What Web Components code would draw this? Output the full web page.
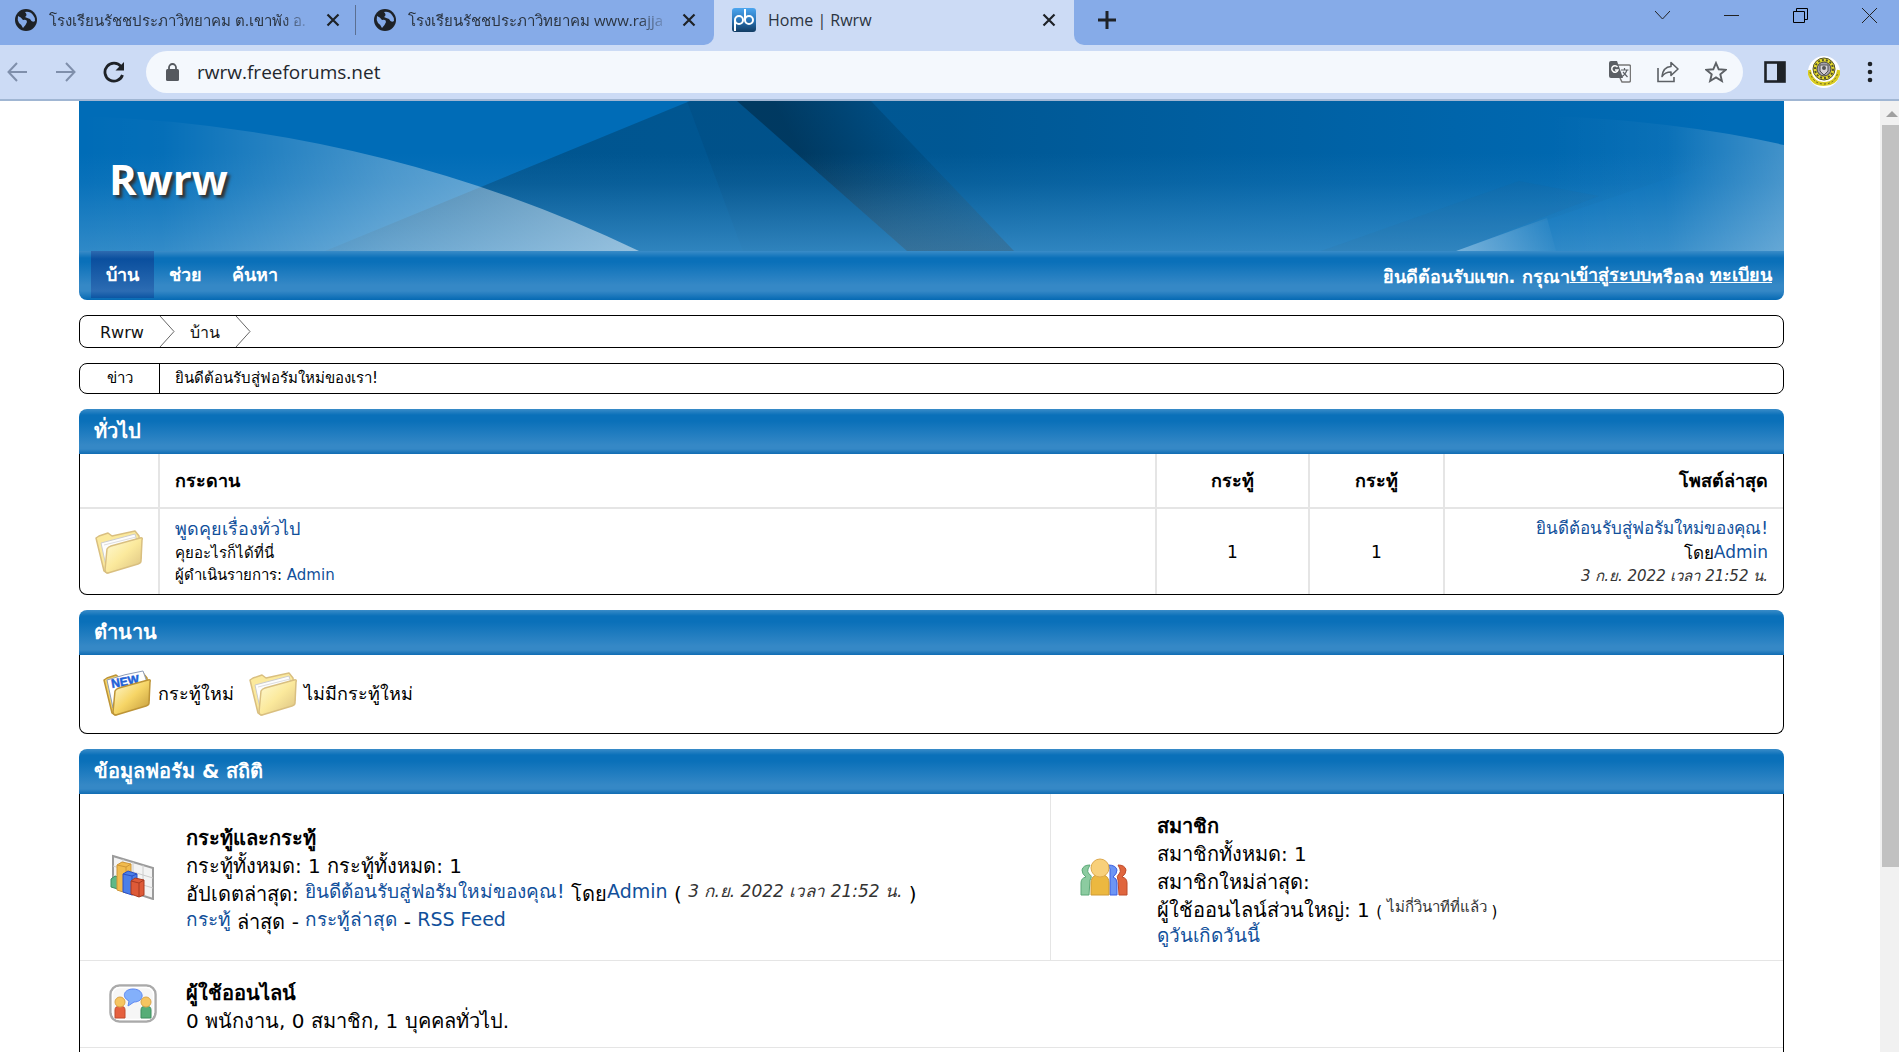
<!DOCTYPE html>
<html lang="th">
<head>
<meta charset="utf-8">
<title>Home | Rwrw</title>
<style>
    html, body {
        margin: 0;
        height: 100%;
    }

    body {
        display: flex;
        flex-direction: column;
        overflow: hidden;
        background: #fff;
        color: #000;
        font-family: "DejaVu Sans", "Noto Sans", sans-serif;
        font-size: 18px;
        --link: #11509b;
        --line: #e5e5e5;
        --bar: linear-gradient(#3a8cc8 0, #0a70b9 6px, #0a70b9 12px, #3588c6 36px, #3588c6 40px, #0f6cb3 100%);
    }
</style>
</head>
<body>
<browser-tabs></browser-tabs>
<browser-toolbar></browser-toolbar>
<page-view>
    <forum-banner name="Rwrw"></forum-banner>
    <forum-nav></forum-nav>
    <crumb-trail></crumb-trail>
    <news-bar label="ข่าว">ยินดีต้อนรับสู่ฟอรัมใหม่ของเรา!</news-bar>
    <forum-panel heading="ทั่วไป"><board-table></board-table></forum-panel>
    <forum-panel heading="ตำนาน"><forum-legend></forum-legend></forum-panel>
    <forum-panel heading="ข้อมูลฟอรัม &amp; สถิติ"><forum-stats></forum-stats></forum-panel>
</page-view>

<script>
// Shared base: puts styles and markup in an open shadow root
class ForumElement extends HTMLElement {
    constructor() {
        super();
        this.attachShadow({ mode: 'open' });
    }

    connectedCallback() {
        this.shadowRoot.innerHTML = `
            <style>
                :host, * { box-sizing: border-box; }
                a { color: var(--link); text-decoration: none; }
                button { border: 0; padding: 0; background: none; color: inherit; font: inherit; display: flex; }
                svg { display: block; flex: none; }
            </style>
            ${this.render()}
        `;
    }
}

const folder = (id, front, edge, paper) => `
    <svg width="48" height="48" viewBox="0 0 48 48">
        <defs>
            <linearGradient id="${id}" x1="0" y1="0" x2="1" y2="1">
                <stop offset="0" stop-color="#fffbd8"/>
                <stop offset=".5" stop-color="${front}"/>
                <stop offset="1" stop-color="${edge}"/>
            </linearGradient>
        </defs>
        <path d="M1 10 L4 8 L13 5 L17 8 L40 3 L44 8 L46 30 L12 45 L9 43 Z" fill="${front}" stroke="${edge}" stroke-width="1.5" stroke-linejoin="round"/>
        ${paper}
        <path d="M12 21 Q13 19 16 18 L45 10 Q48 9 47 12 L46 33 Q46 35 43 36 L13 45 Q10 45 10 42 Z" fill="url(#${id})" stroke="${edge}" stroke-width="1.5" stroke-linejoin="round"/>
    </svg>`;

const icons = {
    folder: folder('read', '#fbe99c', '#d9bf80', `
        <path d="M6 15 L40 6 L42 14 L15 20 L11 38 Z" fill="#fdfdfd" stroke="#ccc" stroke-width="1"/>
        <path d="M9 17 L41 9" stroke="#ddd"/>`),
    folderNew: folder('unread', '#f6d566', '#bd9437', `
        <path d="M4 10 Q22 4 40 1 L44 12 L14 20 L10 38 Z" fill="#fff" stroke="#8e9db8" stroke-width="1"/>
        <text x="9" y="18" transform="rotate(-10 9 18)" font-family="Liberation Sans" font-weight="bold" font-size="12" fill="#1f62d8" stroke="#1f62d8" stroke-width=".5">NEW</text>`),
    chart: `
        <svg width="46" height="46" viewBox="0 0 46 46">
            <path d="M4 2 L44 14 L44 45 L4 32 Z" fill="#f3f3f3" stroke="#9b9b9b" stroke-width="2"/>
            <path d="M4 12 L44 24 M4 22 L44 34 M14 5 V35 M24 8 V38 M34 11 V42" stroke="#ccc"/>
            <path d="M2 25 L6 22 L12 24 V36 L2 33 Z" fill="#5fb887" stroke="#3e8d62"/>
            <path d="M8 11 L13 8 L22 10 V38 L17 39 L8 36 Z" fill="#f1bb4d" stroke="#cf9637"/>
            <path d="M8 11 L17 13 L22 10 M17 13 V39" fill="none" stroke="#cf9637"/>
            <path d="M14 20 L19 17 L28 20 V40 L23 41 L14 38 Z" fill="#4a7fe8" stroke="#2b4fc4"/>
            <path d="M14 20 L23 22 L28 20 M23 22 V41" fill="none" stroke="#2b4fc4"/>
            <path d="M22 27 L26 24 L35 26 V41 L30 43 L22 40 Z" fill="#de5a38" stroke="#a83a20"/>
            <path d="M22 27 L30 29 L35 26 M30 29 V43" fill="none" stroke="#a83a20"/>
        </svg>`,
    members: `
        <svg width="48" height="40" viewBox="0 0 48 40">
            <g stroke-width="1">
                <path d="M1 38 V26 Q1 21 6 20 Q2 17 2 13 Q3 8 10 8 L8 12 Q7 15 9 17 Q13 19 10 23 L9 38 Z" fill="#8ccba0" stroke="#5ca878"/>
                <path d="M47 38 V26 Q47 21 42 20 Q46 17 46 13 Q45 8 38 8 L40 12 Q41 15 39 17 Q36 19 38 23 L39 38 Z" fill="#e0663e" stroke="#be4a2a"/>
                <path d="M37 38 V26 Q37 21 33 20 Q37 17 37 13 Q36 8 28 8 L30 12 V38 Z" fill="#6d95f4" stroke="#3c5fe0"/>
                <path d="M11 38 V26 Q11 20 16 18 H24 Q29 20 29 26 V38 Z" fill="#ecb840" stroke="#cf9a35"/>
                <circle cx="20" cy="11" r="9" fill="#f8d07a" stroke="#dda94c"/>
            </g>
        </svg>`,
    chat: `
        <svg width="48" height="40" viewBox="0 0 48 40">
            <rect x="1.500" y="1.500" width="45" height="36" rx="9" fill="#f6f6f6" stroke="#aaa" stroke-width="2.500"/>
            <rect x="3.500" y="3.500" width="41" height="32" rx="7" fill="none" stroke="#fff" stroke-width="1.500"/>
            <path d="M24 5 C36 5 36 18 25 18 L19 22 L20 17 C12 13 15 5 24 5 Z" fill="#83b0fb" stroke="#5b86f2"/>
            <path d="M6 34 V26 Q6 22 11 22 Q16 22 16 26 V34 Z" fill="#e5603e" stroke="#c04a2c"/>
            <circle cx="11" cy="18" r="5" fill="#f6c561" stroke="#dca548"/>
            <path d="M32 34 V26 Q32 22 37 22 Q42 22 42 26 V34 Z" fill="#56ad77" stroke="#3d8e5e"/>
            <circle cx="37" cy="18" r="5" fill="#f6c561" stroke="#dca548"/>
        </svg>`,
    globe: `
        <svg width="22" height="22" viewBox="0 0 22 22">
            <circle cx="11" cy="11" r="11" fill="#1e2227"/>
            <path d="M3 7 Q6 8 8 11 Q12 10 12 13 Q11 16 8 19 Q7 16 4 14 Q2 11 3 7 Z M10 3 Q15 2 18 6 Q20 8 20 12 Q17 14 15 10 Q12 9 10 8 Q13 6 10 3 Z" fill="#86abe8"/>
        </svg>`,
    cross: `<svg width="14" height="14" viewBox="0 0 14 14"><path d="M1.500 1.500 L12.500 12.500 M12.500 1.500 L1.500 12.500" stroke="#1e2227" stroke-width="2.200"/></svg>`,
};

class BrowserTab extends ForumElement {
    render() {
        return `
            <style>
                :host { display: flex; align-items: center; width: 358px; height: 40px; padding: 0 18px 0 15px; color: #2b3440; font-size: 15px; }
                :host([active]) { width: 360px; padding: 0 18px; font-size: 16px; }
                .title { flex: 1; margin: 0 12px; overflow: hidden; white-space: nowrap; line-height: 32px; }
                :host([fade]) .title { mask-image: linear-gradient(90deg, #000 88%, transparent); }
            </style>
            ${this.hasAttribute('active') ? `
            <svg width="24" height="24" viewBox="0 0 24 24">
                <defs><linearGradient id="p" x1="0" y1="0" x2="0" y2="1">
                    <stop offset="0" stop-color="#4ca6f0"/><stop offset=".5" stop-color="#2a76ba"/><stop offset="1" stop-color="#123c63"/>
                </linearGradient></defs>
                <rect width="24" height="24" rx="3" fill="url(#p)"/>
                <g fill="none" stroke="#fff" stroke-width="2">
                    <path d="M3 23 V12 M13 12 V1"/><circle cx="7" cy="12" r="4"/><circle cx="17" cy="12" r="4"/>
                </g>
            </svg>` : icons.globe}
            <span class="title"><slot></slot></span>
            <button aria-label="Close tab">${icons.cross}</button>
        `;
    }
}

class BrowserTabs extends ForumElement {
    render() {
        return `
            <style>
                :host { display: flex; flex: none; height: 45px; background: #ccdbf5; font-family: "Open Sans", "Noto Sans", sans-serif; }
                .before, .after { display: flex; background: #86abe8; }
                .before { border-bottom-right-radius: 10px; }
                .after { flex: 1; justify-content: space-between; align-items: flex-start; padding: 7px 22px 0 24px; border-bottom-left-radius: 10px; }
                .sep { width: 1px; height: 30px; margin: 5px 0 0 -3px; background: #5b6f92; }
                .before browser-tab:last-child { padding-left: 18px; }
                .windows { display: flex; gap: 54px; }
                .add { margin-top: 4px; }
            </style>
            <div class="before">
                <browser-tab fade>โรงเรียนรัชชประภาวิทยาคม ต.เขาพัง อ.</browser-tab>
                <div class="sep"></div>
                <browser-tab fade>โรงเรียนรัชชประภาวิทยาคม www.rajja</browser-tab>
            </div>
            <browser-tab active>Home | Rwrw</browser-tab>
            <div class="after">
                <button class="add" aria-label="New tab"><svg width="18" height="18" viewBox="0 0 18 18"><path d="M9 0 V18 M0 9 H18" stroke="#1e2227" stroke-width="3"/></svg></button>
                <div class="windows">
                    <button aria-label="Search tabs"><svg width="15" height="16" viewBox="0 0 15 16"><path d="M0 4 L7.500 12 L15 4" fill="none" stroke="#222"/></svg></button>
                    <button aria-label="Minimize"><svg width="15" height="16" viewBox="0 0 15 16"><path d="M0 8.500 H15" stroke="#222"/></svg></button>
                    <button aria-label="Restore"><svg width="15" height="16" viewBox="0 0 15 16"><path d="M.5 4.500 H11.500 V15.500 H.5 Z M3.500 4.500 V1.500 H14.500 V12.500 H11.500" fill="none" stroke="#000"/></svg></button>
                    <button aria-label="Close"><svg width="15" height="16" viewBox="0 0 15 16"><path d="M0 1 L15 16 M15 1 L0 16" stroke="#222"/></svg></button>
                </div>
            </div>
        `;
    }
}

class BrowserToolbar extends ForumElement {
    render() {
        return `
            <style>
                :host { display: flex; flex: none; align-items: center; height: 56px; padding: 0 21px 0 7px; border-bottom: 2px solid #a0b6d3; background: #ccdbf5; }
                .nav { display: flex; gap: 27px; margin-right: 21px; }
                .address { flex: 1; display: flex; align-items: center; height: 42px; padding: 0 16px 0 20px; border-radius: 21px; background: #f4f8fd; }
                input { flex: 1; border: 0; outline: 0; margin-left: 18px; padding: 0; background: none; color: #23272d; font: 19px "Open Sans", "Noto Sans", sans-serif; }
                .actions { display: flex; gap: 26px; }
                .right { display: flex; align-items: center; gap: 22px; margin-left: 21px; }
            </style>
            <div class="nav">
                <button aria-label="Back"><svg width="21" height="22" viewBox="0 0 21 22"><path d="M20 11 H2 M10 2 L1.500 11 L10 20" fill="none" stroke="#7f8fab" stroke-width="2"/></svg></button>
                <button aria-label="Forward"><svg width="21" height="22" viewBox="0 0 21 22"><path d="M1 11 H19 M11 2 L19.500 11 L11 20" fill="none" stroke="#7f8fab" stroke-width="2"/></svg></button>
                <button aria-label="Reload"><svg width="22" height="22" viewBox="0 0 22 22"><path d="M18 5.500 A9 9 0 1 0 19.500 14" fill="none" stroke="#1e2227" stroke-width="2.800"/><path d="M21 1 V9.500 H12.500 Z" fill="#1e2227"/></svg></button>
            </div>
            <div class="address">
                <svg width="13" height="18" viewBox="0 0 13 18"><rect y="6" width="13" height="12" rx="1.500" fill="#55595f"/><path d="M3 7 V4.500 A3.500 3.500 0 0 1 10 4.500 V7" fill="none" stroke="#55595f" stroke-width="1.800"/></svg>
                <input aria-label="Address" value="rwrw.freeforums.net">
                <div class="actions">
                    <button aria-label="Translate"><svg width="22" height="22" viewBox="0 0 22 22">
                        <path d="M9 4 H20 Q21.500 4 21.500 5.500 V19 Q21.500 21 20 21 H13 L11 17" fill="none" stroke="#777" stroke-width="1.500"/>
                        <path d="M0 2 Q0 0 2 0 H8 L14 17 H2 Q0 17 0 15 Z" fill="#5c6065"/>
                        <path d="M8.500 6 A3.200 3.200 0 1 0 9 9 H6" fill="none" stroke="#fff" stroke-width="1.500"/>
                        <path d="M12 9 H19.500 M15.500 7 V9 M18 9 Q16 14 13 15.500 M14 11 L18.500 16" fill="none" stroke="#5c6065" stroke-width="1.200"/>
                    </svg></button>
                    <button aria-label="Share"><svg width="22" height="22" viewBox="0 0 22 22">
                        <path d="M1 7 V20.500 H17 V16" fill="none" stroke="#5c6065" stroke-width="1.600"/>
                        <path d="M14 1.500 L21 8 L14 14.500 V11 Q8 11 5 15.500 Q6 6 14 5.500 Z" fill="none" stroke="#5c6065" stroke-width="1.600" stroke-linejoin="round"/>
                    </svg></button>
                    <button aria-label="Bookmark"><svg width="22" height="22" viewBox="0 0 22 22"><path d="M11 2 L13.700 8.300 L20.500 8.900 L15.300 13.300 L16.900 20 L11 16.400 L5.100 20 L6.700 13.300 L1.500 8.900 L8.300 8.300 Z" fill="none" stroke="#5c6065" stroke-width="1.900"/></svg></button>
                </div>
            </div>
            <div class="right">
                <button aria-label="Side panel"><svg width="22" height="22" viewBox="0 0 22 22"><rect x="1.500" y="1.500" width="19" height="19" fill="none" stroke="#1e2227" stroke-width="2.600"/><rect x="13" y="1" width="8" height="20" fill="#1e2227"/></svg></button>
                <button aria-label="Profile"><svg width="32" height="32" viewBox="0 0 32 32">
                    <circle cx="16" cy="16" r="16" fill="#fff"/>
                    <path d="M1 14 Q3 28 16 28 Q29 28 31 14" fill="none" stroke="#d8cb22" stroke-width="4"/>
                    <path d="M2 16 Q5 28 16 28 Q27 28 30 16" fill="none" stroke="#66632a" stroke-dasharray="2 2"/>
                    <circle cx="16" cy="13" r="11" fill="#e8dc2c" stroke="#54532b"/>
                    <circle cx="16" cy="13" r="9" fill="none" stroke="#54532b" stroke-width="2" stroke-dasharray="2 2"/>
                    <circle cx="16" cy="13" r="7" fill="#a5a1ad" stroke="#444"/>
                    <path d="M12 9 H20 V15 L16 19 L12 15 Z" fill="#d8d3d8" stroke="#555"/>
                    <circle cx="16" cy="12" r="2" fill="#555"/>
                </svg></button>
                <button aria-label="Menu"><svg width="16" height="22" viewBox="0 0 16 22" fill="#1e2227"><circle cx="8" cy="3" r="2.300"/><circle cx="8" cy="11" r="2.300"/><circle cx="8" cy="19" r="2.300"/></svg></button>
            </div>
        `;
    }
}

class PageView extends ForumElement {
    render() {
        return `
            <style>
                :host { display: flex; flex: 1; min-height: 0; }
                main { flex: 1; min-width: 0; overflow: hidden; padding: 0 96px 0 79px; }
                .track { width: 19px; background: #f1f1f1; }
                .track svg { margin: 10px 0 8px 6px; }
                .thumb { height: 78%; margin-left: 2px; background: #c1c1c1; }
            </style>
            <main><slot></slot></main>
            <div class="track">
                <svg width="12" height="6" viewBox="0 0 12 6"><path d="M0 6 L6 0 L12 6 Z" fill="#a0a0a0"/></svg>
                <div class="thumb"></div>
            </div>
        `;
    }
}

class ForumBanner extends ForumElement {
    render() {
        return `
            <style>
                :host { display: grid; height: 150px; overflow: hidden; }
                svg, h1 { grid-area: 1 / 1; }
                svg { width: 100%; height: 150px; }
                h1 { align-self: center; z-index: 1; margin: 0; padding: 6px 30px 0; color: #fff; font: 700 42px/60px "Open Sans", sans-serif; text-shadow: 3px 3px 3px #333; }
            </style>
            <svg viewBox="0 0 1705 150" preserveAspectRatio="none">
                <defs>
                    <linearGradient id="dark">
                        <stop offset="0" stop-color="#003050" stop-opacity=".4"/>
                        <stop offset=".45" stop-color="#003050" stop-opacity=".34"/>
                        <stop offset="1" stop-color="#003050" stop-opacity="0"/>
                    </linearGradient>
                    <linearGradient id="glow" x1="0" y1="0" x2="0" y2="1">
                        <stop offset=".35" stop-color="#3f93cd" stop-opacity="0"/>
                        <stop offset=".55" stop-color="#3f93cd" stop-opacity=".15"/>
                        <stop offset="1" stop-color="#3f93cd" stop-opacity=".75"/>
                    </linearGradient>
                    <linearGradient id="band" gradientUnits="userSpaceOnUse" x1="725" y1="60" x2="835" y2="0">
                        <stop offset="0" stop-color="#001c30" stop-opacity=".5"/>
                        <stop offset="1" stop-color="#001c30" stop-opacity=".08"/>
                    </linearGradient>
                    <linearGradient id="haze" x1="0" y1="0" x2="0" y2="1">
                        <stop offset=".4" stop-color="#405868" stop-opacity="0"/>
                        <stop offset="1" stop-color="#405868" stop-opacity=".35"/>
                    </linearGradient>
                    <linearGradient id="arc">
                        <stop offset="0" stop-color="#fff" stop-opacity="0"/>
                        <stop offset=".15" stop-color="#fff" stop-opacity=".02"/>
                        <stop offset=".55" stop-color="#fff" stop-opacity=".28"/>
                        <stop offset="1" stop-color="#fff" stop-opacity=".5"/>
                    </linearGradient>
                    <linearGradient id="arc2">
                        <stop offset="0" stop-color="#fff" stop-opacity="0"/>
                        <stop offset=".5" stop-color="#fff" stop-opacity=".04"/>
                        <stop offset="1" stop-color="#fff" stop-opacity=".26"/>
                    </linearGradient>
                    <linearGradient id="tip">
                        <stop offset="0" stop-color="#fff" stop-opacity=".35"/>
                        <stop offset="1" stop-color="#fff" stop-opacity=".02"/>
                    </linearGradient>
                </defs>
                <rect width="1705" height="150" fill="#006cb7"/>
                <path d="M611 0 H1640 V60 L1377 150 H246 Z" fill="url(#dark)"/>
                <path d="M608 0 H658 L828 150 H664 Z" fill="#002a48" fill-opacity=".1"/>
                <path d="M658 0 H792 L935 150 H828 Z" fill="url(#band)"/>
                <rect width="1705" height="150" fill="url(#glow)"/>
                <path d="M658 0 H792 L935 150 H828 Z" fill="url(#haze)"/>
                <path d="M1242 150 L1440 80 L1520 95 L1377 150 Z" fill="#405868" fill-opacity=".06"/>
                <path d="M0 15 Q300 25 560 150 H0 Z" fill="url(#arc)"/>
                <path d="M1470 15 Q1600 20 1705 44 V150 H1470 Z" fill="url(#arc2)"/>
                <path d="M1377 150 L1468 117 L1477 150 Z" fill="url(#tip)"/>
            </svg>
            <h1>${this.getAttribute('name')}</h1>
        `;
    }
}

class ForumNav extends ForumElement {
    render() {
        return `
            <style>
                :host { display: flex; justify-content: space-between; height: 49px; padding: 0 12px; border-radius: 0 0 8px 8px; background: linear-gradient(#3a8cc8 0, #0a70b9 7px, #0a70b9 11px, #3588c6 34px, #3588c6 40px, #0569b3 100%); color: #fff; font-weight: bold; font-size: 18px; }
                nav { display: flex; }
                nav a { height: 47px; padding: 0 15px; line-height: 48px; color: #fff; }
                nav a.active { background: linear-gradient(#2e6bb0, #0a4f9e 8px, #2c6cb3 40px, #0c55a3); }
                p { margin: 0; line-height: 52px; }
                p a { display: inline-block; vertical-align: top; line-height: 48px; color: #fff; text-decoration: underline; }
            </style>
            <nav>
                <a class="active" href="#">บ้าน</a>
                <a href="#help">ช่วย</a>
                <a href="#search">ค้นหา</a>
            </nav>
            <p>ยินดีต้อนรับแขก. กรุณา<a href="#login">เข้าสู่ระบบ</a>หรือลง <a href="#register">ทะเบียน</a></p>
        `;
    }
}

class CrumbTrail extends ForumElement {
    render() {
        const chevron = '<svg width="16" height="31" viewBox="0 0 16 31"><path d="M1 0 L15 15.500 L1 31" fill="none" stroke="#666"/></svg>';
        return `
            <style>
                :host { display: block; margin-top: 15px; border: 1px solid #000; border-radius: 8px; font-size: 16px; }
                nav { display: flex; height: 31px; padding-left: 20px; gap: 15px; line-height: 33px; }
                a { color: #111; }
            </style>
            <nav><a href="#">Rwrw</a>${chevron}<a href="#">บ้าน</a>${chevron}</nav>
        `;
    }
}

class NewsBar extends ForumElement {
    render() {
        return `
            <style>
                :host { display: flex; margin-top: 15px; border: 1px solid #000; border-radius: 8px; font-size: 15px; line-height: 29px; }
                b { width: 80px; border-right: 1px solid #000; font-weight: normal; text-align: center; }
                span { padding-left: 15px; }
            </style>
            <b>${this.getAttribute('label')}</b><span><slot></slot></span>
        `;
    }
}

class ForumPanel extends ForumElement {
    render() {
        return `
            <style>
                :host { display: block; margin-top: 15px; }
                h2 { margin: 0; padding: 0 15px; border-radius: 8px 8px 0 0; background: var(--bar); color: #fff; font-size: 20px; line-height: 45px; }
                div { border: 1px solid #000; border-top: 0; border-radius: 0 0 8px 8px; }
            </style>
            <h2>${this.getAttribute('heading').replace('&', '&amp;')}</h2>
            <div><slot></slot></div>
        `;
    }
}

class BoardTable extends ForumElement {
    render() {
        return `
            <style>
                table { width: 100%; table-layout: fixed; border-collapse: collapse; }
                th, td { padding: 0 15px; text-align: center; font-size: 18px; }
                th { height: 54px; border-bottom: 2px solid var(--line); }
                td { height: 86px; font-size: 17px; }
                th + th, td + td { border-left: 2px solid var(--line); }
                .icon { width: 79px; }
                .topics { width: 153px; }
                .posts { width: 135px; }
                .latest { width: 339px; text-align: right; }
                .main { text-align: left; }
                p { margin: 0; font-size: 15px; line-height: 22px; }
                p.large { font-size: 17px; line-height: 24px; }
                .main p.large { font-size: 18px; }
                p.large a { display: inline-block; vertical-align: top; line-height: 22px; }
                time { font-style: italic; color: #333; }
            </style>
            <table>
                <thead>
                    <tr>
                        <th class="icon"></th>
                        <th class="main">กระดาน</th>
                        <th class="topics">กระทู้</th>
                        <th class="posts">กระทู้</th>
                        <th class="latest">โพสต์ล่าสุด</th>
                    </tr>
                </thead>
                <tbody>
                    <tr>
                        <td>${icons.folder}</td>
                        <td class="main">
                            <p class="large"><a href="#board">พูดคุยเรื่องทั่วไป</a></p>
                            <p>คุยอะไรก็ได้ที่นี่</p>
                            <p>ผู้ดำเนินรายการ: <a href="#admin">Admin</a></p>
                        </td>
                        <td>1</td>
                        <td>1</td>
                        <td class="latest">
                            <p class="large"><a href="#thread">ยินดีต้อนรับสู่ฟอรัมใหม่ของคุณ!</a></p>
                            <p class="large">โดย<a href="#admin">Admin</a></p>
                            <p><time>3 ก.ย. 2022 เวลา 21:52 น.</time></p>
                        </td>
                    </tr>
                </tbody>
            </table>
        `;
    }
}

class ForumLegend extends ForumElement {
    render() {
        return `
            <style>
                :host { display: flex; gap: 15px; padding: 15px 23px; }
                span { display: flex; align-items: center; gap: 7px; line-height: 48px; }
            </style>
            <span>${icons.folderNew}กระทู้ใหม่</span>
            <span>${icons.folder}ไม่มีกระทู้ใหม่</span>
        `;
    }
}

class StatBlock extends ForumElement {
    render() {
        return `
            <style>
                :host { display: flex; align-items: center; gap: 30px; padding: 12px 29px; }
                .icon { width: 47px; }
                .text { padding-top: 6px; }
            </style>
            <div class="icon">${icons[this.getAttribute('icon')]}</div>
            <div class="text"><slot></slot></div>
        `;
    }
}

class ForumStats extends ForumElement {
    render() {
        return `
            <style>
                .row { display: grid; grid-template-columns: 970fr 733fr; border-bottom: 1px solid var(--line); }
                .row + .row { grid-template-columns: 1fr; }
                .row stat-block + stat-block { border-left: 1px solid var(--line); }
                .row:last-child { height: 80px; }
                h3, p { margin: 0; font-size: 20px; line-height: 28px; white-space: nowrap; }
                p { height: 28px; }
                a { display: inline-block; vertical-align: top; font-size: 19px; line-height: 22px; }
                time { display: inline-block; vertical-align: top; color: #333; font-size: 17px; font-style: italic; line-height: 22px; }
                small, small time { font-size: 15px; font-style: normal; }
                .last { height: 24px; line-height: 24px; }
            </style>
            <div class="row">
                <stat-block icon="chart">
                    <h3>กระทู้และกระทู้</h3>
                    <p>กระทู้ทั้งหมด: 1 กระทู้ทั้งหมด: 1</p>
                    <p>อัปเดตล่าสุด: <a href="#thread">ยินดีต้อนรับสู่ฟอรัมใหม่ของคุณ!</a> โดย<a href="#admin">Admin</a> ( <time>3 ก.ย. 2022 เวลา 21:52 น.</time> )</p>
                    <p><a href="#posts">กระทู้</a> ล่าสุด - <a href="#threads">กระทู้ล่าสุด</a> - <a href="#rss">RSS Feed</a></p>
                </stat-block>
                <stat-block icon="members">
                    <h3>สมาชิก</h3>
                    <p>สมาชิกทั้งหมด: 1</p>
                    <p>สมาชิกใหม่ล่าสุด:</p>
                    <p>ผู้ใช้ออนไลน์ส่วนใหญ่: 1 <small>( <time>ไม่กี่วินาทีที่แล้ว</time> )</small></p>
                    <p class="last"><a href="#birthdays">ดูวันเกิดวันนี้</a></p>
                </stat-block>
            </div>
            <div class="row">
                <stat-block icon="chat">
                    <h3>ผู้ใช้ออนไลน์</h3>
                    <p>0 พนักงาน, 0 สมาชิก, 1 บุคคลทั่วไป.</p>
                </stat-block>
            </div>
            <div class="row"></div>
        `;
    }
}

customElements.define('browser-tab', BrowserTab);
customElements.define('browser-tabs', BrowserTabs);
customElements.define('browser-toolbar', BrowserToolbar);
customElements.define('page-view', PageView);
customElements.define('forum-banner', ForumBanner);
customElements.define('forum-nav', ForumNav);
customElements.define('crumb-trail', CrumbTrail);
customElements.define('news-bar', NewsBar);
customElements.define('forum-panel', ForumPanel);
customElements.define('board-table', BoardTable);
customElements.define('forum-legend', ForumLegend);
customElements.define('stat-block', StatBlock);
customElements.define('forum-stats', ForumStats);
</script>
</body>
</html>
